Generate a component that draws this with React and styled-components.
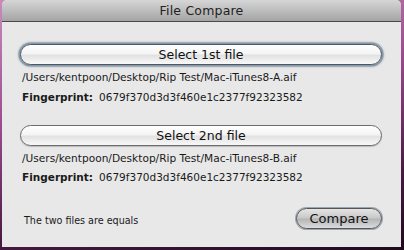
import styled, { createGlobalStyle } from 'styled-components';

const Global = createGlobalStyle`
  html, body { margin: 0; padding: 0; }
  body { width: 404px; height: 250px; overflow: hidden; }
`;

// Fundo da área de trabalho atrás da janela
const Desktop = styled.div`
  width: 404px;
  height: 250px;
  box-sizing: border-box;
  padding: 0 3px 3px 2px;
  background: linear-gradient(170deg, #c88cbc 0%, #9a4a8e 40%, #4a1a44 75%, #1e0a1c 100%);
  font-family: "DejaVu Sans", "Liberation Sans", sans-serif;
  color: #1a1a1a;
`;

const Window = styled.div`
  height: 100%;
  display: flex;
  flex-direction: column;
  background: #e8e8e8;
  border-radius: 5px 5px 0 0;
  overflow: hidden;
`;

const TitleBar = styled.div`
  height: 21px;
  flex: none;
  display: flex;
  align-items: center;
  justify-content: center;
  background: linear-gradient(#d6d6d6, #a4a4a4);
  border-bottom: 1px solid #4a4a4a;
  font-size: 12.5px;
  color: #222;
  letter-spacing: 0.2px;
`;

const Body = styled.div`
  flex: 1;
  display: flex;
  flex-direction: column;
  padding: 22px 19px 0 18px;
`;

const FileGroup = styled.div`
  display: flex;
  flex-direction: column;
  margin-bottom: ${p => p.$gap || 0}px;
`;

const PillButton = styled.button`
  height: 21px;
  width: ${p => p.$width || '100%'};
  box-sizing: border-box;
  border-radius: 11px;
  border: 1px solid ${p => (p.$focus ? '#4a5866' : '#6c6c6c')};
  box-shadow: ${p => (p.$focus ? '0 0 0 1.5px #8a98a6, 0 0 2px 2px #aab4be' : '0 1px 1px rgba(0,0,0,0.2)')};
  background: linear-gradient(#ffffff 0%, #f4f4f4 45%, #e2e2e2 55%, #f8f8f8 100%);
  font-family: inherit;
  font-size: 12.5px;
  color: #111;
  padding: 0;
  cursor: default;
`;

const CompareButton = styled(PillButton)`
  background: linear-gradient(#e4e4e4 0%, #c8c8c8 48%, #b4b4b4 52%, #dcdcdc 100%);
  border-color: #555;
  box-shadow: 0 0 0 1px #9aa6b2;
  font-size: 13px;
`;

const PathText = styled.div`
  font-size: 10.6px;
  margin: 6px 0 0 2px;
  white-space: nowrap;
`;

const PrintRow = styled.div`
  font-size: 10.5px;
  margin: ${p => p.$top || 8}px 0 0 2px;
  display: flex;
  gap: 6px;
  white-space: nowrap;
`;

const Label = styled.span`
  font-weight: bold;
`;

const Footer = styled.div`
  margin-top: auto;
  margin-bottom: 18px;
  display: flex;
  align-items: center;
  justify-content: space-between;
`;

const Status = styled.div`
  font-size: 9.6px;
  margin-left: 4px;
  padding-top: 3px;
`;

export default function App() {
  return (
    <Desktop>
      <Global />
      <Window>
        <TitleBar>File Compare</TitleBar>
        <Body>
          <FileGroup $gap={22}>
            <PillButton $focus>Select 1st file</PillButton>
            <PathText>/Users/kentpoon/Desktop/Rip Test/Mac-iTunes8-A.aif</PathText>
            <PrintRow>
              <Label>Fingerprint:</Label>
              <span>0679f370d3d3f460e1c2377f92323582</span>
            </PrintRow>
          </FileGroup>
          <FileGroup>
            <PillButton>Select 2nd file</PillButton>
            <PathText>/Users/kentpoon/Desktop/Rip Test/Mac-iTunes8-B.aif</PathText>
            <PrintRow $top={7}>
              <Label>Fingerprint:</Label>
              <span>0679f370d3d3f460e1c2377f92323582</span>
            </PrintRow>
          </FileGroup>
          <Footer>
            <Status>The two files are equals</Status>
            <CompareButton $width="86px">Compare</CompareButton>
          </Footer>
        </Body>
      </Window>
    </Desktop>
  );
}
